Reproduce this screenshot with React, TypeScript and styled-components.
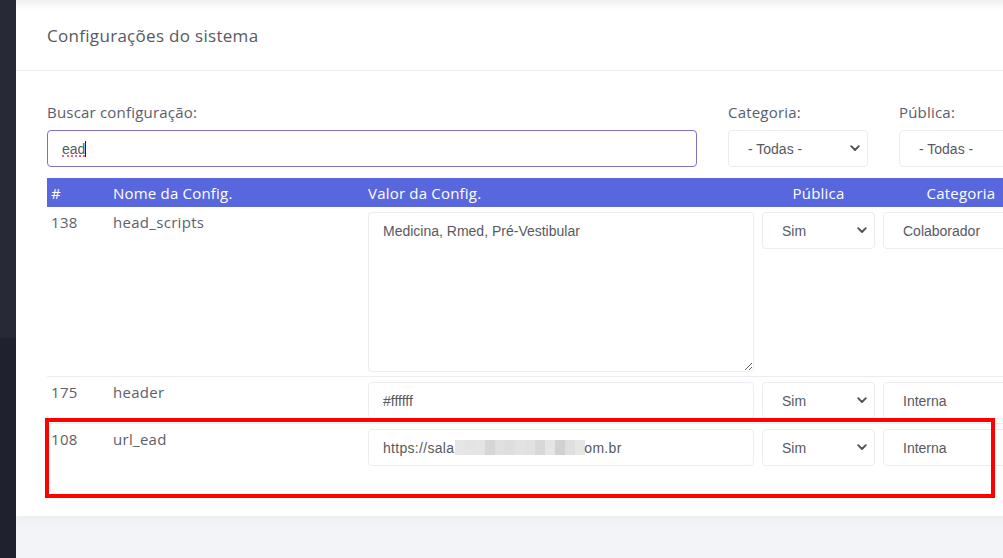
import React from "react";
import styled, { createGlobalStyle } from "styled-components";

const Global = createGlobalStyle`
  html, body { margin: 0; padding: 0; }
  body { background: #f2f4f7; width: 1003px; height: 558px; overflow: hidden; }
  * { box-sizing: border-box; }
`;

const Page = styled.div`
  display: flex;
  width: 1003px;
  height: 558px;
  overflow: hidden;
`;

const Sidebar = styled.aside`
  flex: 0 0 16px;
  background: linear-gradient(#272937 0, #272937 338px, #1f212e 338px, #1f212e 100%);
`;

const Main = styled.main`
  flex: 1;
  overflow: hidden;
  background: #f2f4f7;
`;

const Card = styled.section`
  position: relative;
  width: 1100px;
  height: 516px;
  background: linear-gradient(#efeff0 0, #f8f8f8 5px, #ffffff 10px);
  box-shadow: 0 2px 10px rgba(80, 90, 120, 0.06);
  font-family: "Open Sans", "Noto Sans", sans-serif;
  color: #595d6e;
`;

const CardHeader = styled.header`
  height: 71px;
  display: flex;
  align-items: center;
  padding: 0 0 0 31px;
  border-bottom: 1px solid #ebedf2;
`;

const Title = styled.h3`
  margin: 0;
  font-size: 17px;
  font-weight: 400;
  letter-spacing: 0.3px;
  color: #575962;
`;

const CardBody = styled.div`
  padding: 31px 0 0 31px;
`;

const Filters = styled.div`
  display: flex;
  gap: 31px;
`;

const Field = styled.label<{ $w: number }>`
  display: flex;
  flex-direction: column;
  width: ${(p) => p.$w}px;
`;

const FieldLabel = styled.span`
  font-size: 15px;
  line-height: 20px;
  letter-spacing: 0.2px;
  margin-bottom: 8px;
  color: #595d6e;
`;

const baseControl = `
  font-family: "Liberation Sans", Arial, sans-serif;
  font-size: 14px;
  color: #575962;
  background: #fff;
  border: 1px solid #ebedf2;
  border-radius: 4px;
  outline: none;
`;

const SearchWrap = styled.div`
  position: relative;
`;

const SearchInput = styled.input`
  ${baseControl}
  width: 100%;
  height: 37px;
  padding: 0 14px;
  border-color: #7b72cf;
`;

const SpellMark = styled.span`
  position: absolute;
  left: 15px;
  top: 25px;
  width: 23px;
  border-bottom: 2px dotted #ee6b6a;
  pointer-events: none;
`;

const Caret = styled.span`
  position: absolute;
  left: 38px;
  top: 11px;
  width: 1px;
  height: 16px;
  background: #222;
  pointer-events: none;
`;

const SelectWrap = styled.div<{ $w?: number }>`
  position: relative;
  width: ${(p) => (p.$w ? `${p.$w}px` : "100%")};
`;

const Select = styled.select`
  ${baseControl}
  appearance: none;
  -webkit-appearance: none;
  width: 100%;
  height: 37px;
  padding: 0 24px 0 19px;
`;

const Chevron = styled.svg`
  position: absolute;
  right: 8px;
  top: 15px;
  width: 10px;
  height: 7px;
  pointer-events: none;
`;

const Table = styled.table`
  margin-top: 11px;
  border-collapse: collapse;
  table-layout: fixed;
  width: 996px;
`;

const Th = styled.th<{ $center?: boolean }>`
  background: #5867dd;
  color: #fff;
  font-weight: 400;
  font-size: 15px;
  letter-spacing: 0.2px;
  height: 29px;
  line-height: 20px;
  padding: 0 4px;
  text-align: ${(p) => (p.$center ? "center" : "left")};
`;

const Tr = styled.tr`
  border-bottom: 1px solid #ebedf2;
  &:last-child {
    border-bottom: none;
  }
`;

const Td = styled.td`
  vertical-align: top;
  padding: 5px 4px 4px;
  font-size: 15px;
  letter-spacing: 0.3px;
  line-height: 20px;
  color: #5d5f6b;
`;

const TextArea = styled.textarea`
  ${baseControl}
  display: block;
  width: 100%;
  height: 160px;
  padding: 10px 14px;
  line-height: 17px;
`;

const TextInput = styled.input`
  ${baseControl}
  display: block;
  width: 100%;
  height: 37px;
  padding: 0 14px;
`;

const ValueBox = styled.div`
  ${baseControl}
  display: flex;
  align-items: center;
  height: 37px;
  padding: 0 14px;
`;

const Pixelated = styled.span`
  display: inline-flex;
  height: 15px;
  margin: 0 -1px 0 1px;
`;

const Pixel = styled.span`
  display: block;
  width: 10px;
  height: 15px;
`;

const Highlight = styled.div`
  position: absolute;
  left: 29px;
  top: 418px;
  width: 950px;
  height: 80px;
  border: 4px solid #ff0000;
  pointer-events: none;
`;

const ChevronIcon = () => (
  <Chevron viewBox="0 0 10 7">
    <path d="M1.2 1.2 L5 5 L8.8 1.2" fill="none" stroke="#50535e" strokeWidth="1.9" strokeLinecap="round" strokeLinejoin="round" />
  </Chevron>
);

const SelectBox = ({ value, w, arrow = true }: { value: string; w?: number; arrow?: boolean }) => (
  <SelectWrap $w={w}>
    <Select defaultValue={value}>
      <option>{value}</option>
    </Select>
    {arrow && <ChevronIcon />}
  </SelectWrap>
);

const pixels = ["#e6e6e6", "#e4e4e4", "#e5e5e5", "#d6d6d6", "#e0e0e0", "#dedede", "#e3e3e3", "#e1e1e1", "#d8d8d8", "#e5e5e5", "#d1d1d1", "#dfdfdf", "#e6e6e6"];

export default function App() {
  return (
    <>
      <Global />
      <Page>
        <Sidebar />
        <Main>
          <Card>
            <CardHeader>
              <Title>Configurações do sistema</Title>
            </CardHeader>
            <CardBody>
              <Filters>
                <Field $w={650}>
                  <FieldLabel>Buscar configuração:</FieldLabel>
                  <SearchWrap>
                    <SearchInput defaultValue="ead" spellCheck={false} />
                    <SpellMark />
                    <Caret />
                  </SearchWrap>
                </Field>
                <Field $w={140}>
                  <FieldLabel>Categoria:</FieldLabel>
                  <SelectBox value="- Todas -" />
                </Field>
                <Field $w={140}>
                  <FieldLabel>Pública:</FieldLabel>
                  <SelectBox value="- Todas -" />
                </Field>
              </Filters>
              <Table>
                <colgroup>
                  <col style={{ width: 62 }} />
                  <col style={{ width: 255 }} />
                  <col style={{ width: 394 }} />
                  <col style={{ width: 121 }} />
                  <col style={{ width: 164 }} />
                </colgroup>
                <thead>
                  <tr>
                    <Th>#</Th>
                    <Th>Nome da Config.</Th>
                    <Th>Valor da Config.</Th>
                    <Th $center>Pública</Th>
                    <Th $center>Categoria</Th>
                  </tr>
                </thead>
                <tbody>
                  <Tr>
                    <Td>138</Td>
                    <Td>head_scripts</Td>
                    <Td>
                      <TextArea defaultValue="Medicina, Rmed, Pré-Vestibular" spellCheck={false} />
                    </Td>
                    <Td>
                      <SelectBox value="Sim" />
                    </Td>
                    <Td>
                      <SelectBox value="Colaborador" arrow={false} />
                    </Td>
                  </Tr>
                  <Tr>
                    <Td>175</Td>
                    <Td>header</Td>
                    <Td>
                      <TextInput defaultValue="#ffffff" />
                    </Td>
                    <Td>
                      <SelectBox value="Sim" />
                    </Td>
                    <Td>
                      <SelectBox value="Interna" arrow={false} />
                    </Td>
                  </Tr>
                  <Tr>
                    <Td>108</Td>
                    <Td>url_ead</Td>
                    <Td>
                      <ValueBox>
                        https://sala
                        <Pixelated>
                          {pixels.map((c, i) => (
                            <Pixel key={i} style={{ background: c }} />
                          ))}
                        </Pixelated>
                        om.br
                      </ValueBox>
                    </Td>
                    <Td>
                      <SelectBox value="Sim" />
                    </Td>
                    <Td>
                      <SelectBox value="Interna" arrow={false} />
                    </Td>
                  </Tr>
                </tbody>
              </Table>
            </CardBody>
            <Highlight />
          </Card>
        </Main>
      </Page>
    </>
  );
}
